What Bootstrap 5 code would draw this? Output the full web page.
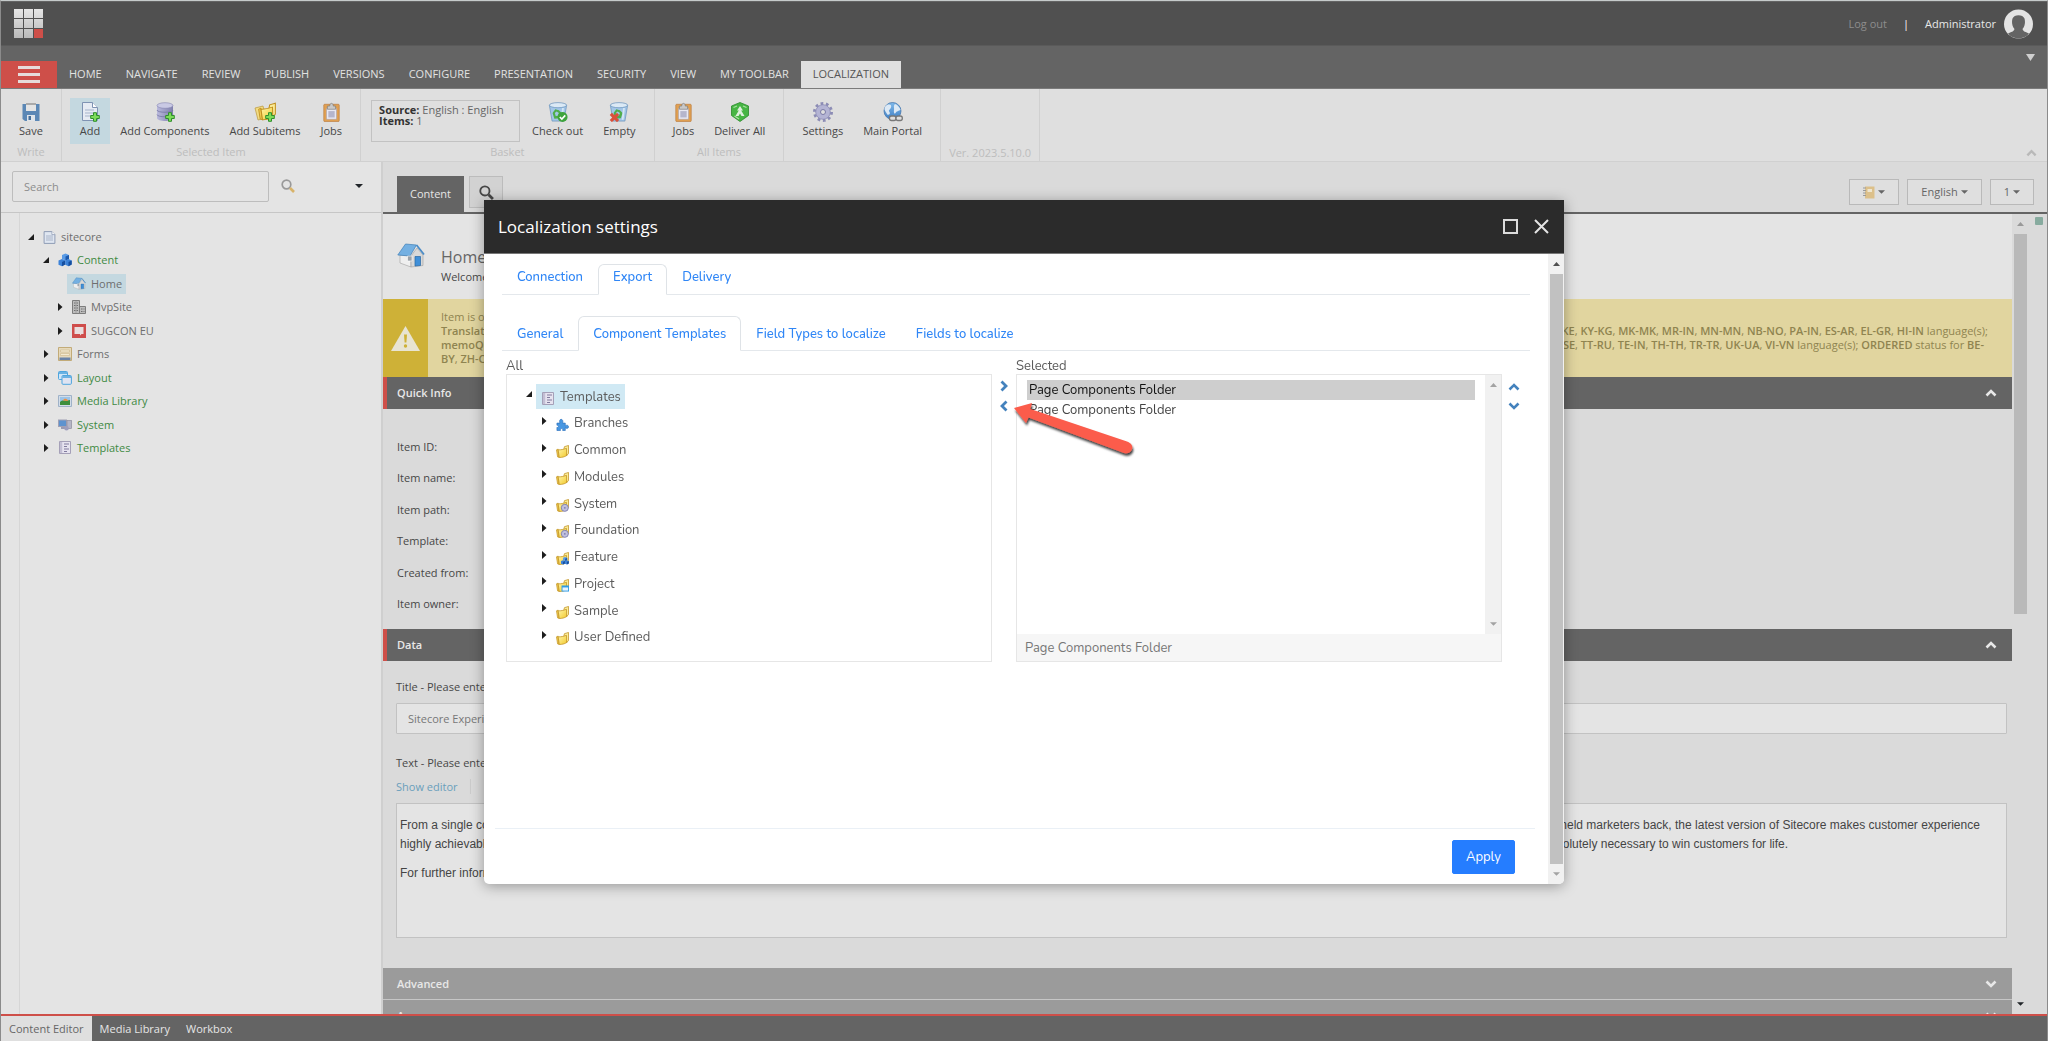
<!DOCTYPE html>
<html lang="en">
<head>
<meta charset="utf-8">
<meta name="viewport" content="width=device-width, initial-scale=1">
<title>Content Editor</title>
<link href="https://cdn.jsdelivr.net/npm/bootstrap@5.3.0/dist/css/bootstrap.min.css" rel="stylesheet">
<style>
  body { font-family: "Open Sans", sans-serif; font-size: 11px; line-height: 16px; color: #474747; background: #dadada; border-left: 1px solid #8b8b8b; border-right: 1px solid #8b8b8b; border-top: 1px solid #c6cbcb; }
  button { font: inherit; color: inherit; }
  svg { display: block; flex: none; }
  .plain-btn { background: none; border: 0; padding: 0; }

  /* global header */
  .top-header { height: 45px; background: #505050; border-top: 1px solid #646464; border-bottom: 1px solid #5a5a5a; padding: 0 14px 0 13px; }
  .top-header a { color: #8d8d8d; text-decoration: none; }
  .top-header .user { color: #e8e8e8; }

  /* ribbon */
  .ribbon-tabs { height: 43px; background: #646464; border-bottom: 1px solid #7b7b7b; padding-right: 12px; }
  .menu-btn { width: 56px; height: 27px; background: #ce4f49; }
  .menu-btn span { width: 22px; height: 3px; background: #e6dcdb; }
  .ribbon-tabs .nav-link { color: #e2e2e2; padding: 5px 12px; height: 27px; border-radius: 0; }
  .ribbon-tabs .nav-link.active { background: #dfdfdf; color: #555; }
  .ribbon { height: 73px; background: #dfdfdf; border-bottom: 1px solid #d0d0d0; padding-right: 10px; }
  .chunk { border-right: 1px solid #d0d0d0; padding: 9px 8px 0; }
  .chunk-name { color: #bdbdbd; text-align: center; }
  .rb { height: 46px; padding: 4px 10px 0; display: flex; flex-direction: column; align-items: center; background: none; border: 0; gap: 1px; }
  .rb.on { background: #c4d8e0; }
  .source-box { width: 149px; height: 42px; border: 1px solid #c2c2c2; padding: 3px 7px; line-height: 11px; margin: 2px; }
  .source-box div { color: #666; }
  .source-box b { color: #333; }

  /* tree panel */
  .side { width: 382px; background: #e4e4e4; border-right: 2px solid #cfcfcf; }
  .side-search { height: 51px; border-bottom: 1px solid #c6c6c6; padding: 8px 18px 10px 11px; }
  .side-search .form-control { width: 257px; height: 31px; font-size: 11px; background: #e4e4e4; border: 1px solid #bdbdbd; border-radius: 2px; padding: 0 11px; }
  .side-search .form-control::placeholder { color: #8d8d8d; }
  .gutter { width: 19px; border-right: 1px solid #d6d6d6; }
  .side-tree { height: 231px; margin-top: 14px; color: #6e6e6e; }
  .node { height: 20px; display: flex; align-items: center; }
  .node a { color: inherit; text-decoration: none; display: flex; align-items: center; gap: 5px; padding: 2px 4px 2px 5px; }
  .node a.on { background: #c4d8e0; }
  .node .tog { width: 6px; margin-right: 4px; }
  .lv0 { padding-left: 8px; } .lv1 { padding-left: 23px; } .lv2 { padding-left: 37px; }
  .node .sys { color: #418a43; }

  /* editor */
  .ed-tabs { height: 52px; border-bottom: 2px solid #646464; padding: 14px 13px 0 14px; }
  .ed-tab { width: 67px; height: 36px; background: #646464; color: #e6e6e6; }
  .ed-find { width: 34px; height: 32px; background: #d2d2d2; border: 1px solid #bcbcbc; margin-left: 5px; }
  .ed-tools { margin-top: 3px; }
  .ed-btn { height: 26px; border: 1px solid #b9b9b9; background: #dfdfdf; color: #666; padding: 0 13px; display: flex; align-items: center; gap: 3px; }
  .item-head { height: 85px; background: #e4e4e4; padding: 29px 14px 0; }
  .item-head h1 { font-size: 16px; line-height: 20px; color: #666; margin: 0 0 2px; }
  .warn { height: 78px; background: #e1d59f; color: #8f8450; line-height: 14px; }
  .warn b { font-weight: 600; }
  .warn-ico { width: 45px; background: #ceb137; }
  .warn-text { padding: 11px 24px 0 13px; }
  .sec { height: 32px; background: #646464; color: #e8e8e8; border-left: 4px solid #ce4f49; padding: 0 15px 0 10px; font-weight: 600; width: 100%; }
  .sec.shut { background: #9b9b9b; border-left: 0; border-bottom: 1px solid #c6c6c6; padding-left: 14px; }
  .quick { height: 220px; padding: 22px 14px 10px; }
  .quick dt { font-weight: 500; height: 31px; line-height: 31px; }
  .data { height: 307px; padding: 18px 5px 0 13px; }
  .data .form-control { background: #e4e4e4; border: 1px solid #c2c2c2; border-radius: 1px; font-size: 11px; color: #777; height: 31px; padding: 0 11px; margin: 8px 0 21px; }
  .rich { height: 135px; background: #e4e4e4; border: 1px solid #c2c2c2; padding: 12px 20px 0 3px; font-family: "Liberation Sans", Arial, sans-serif; font-size: 12px; line-height: 19px; color: #444; }
  .rich p { margin: 0 0 10px; }
  .show-ed { color: #6a9fbc; text-decoration: none; border-right: 1px solid #cbcbcb; padding-right: 12px; }
  .sb { width: 16px; display: flex; flex-direction: column; align-items: center; }
  .sb .thumb { width: 13px; background: #b9b9b9; }
  .side-mark { padding: 3px 4px 0 7px; }
  .side-dot { width: 8px; height: 8px; background: #87ab9f; border-radius: 1px; }

  /* taskbar */
  .taskbar { height: 27px; background: #646464; border-top: 2px solid #ce4f49; }
  .taskbar a { color: #e6e6e6; text-decoration: none; padding: 5px 8px 0; }
  .taskbar a.on { background: #dfdfdf; color: #666; }

  /* dialog */
  .dlg { --bs-modal-width: 1080px; margin: 200px auto 0; }
  .dlg .modal-content { height: 684px; border: 0; border-radius: 0 0 5px 5px; box-shadow: 0 2px 14px rgba(0,0,0,.35); color: #5a5a5a; font-family: Nunito, Lato, sans-serif; font-size: 13px; line-height: 18px; overflow: hidden; }
  .dlg .modal-header { height: 54px; background: #2b2b2b; border-bottom: 1px solid #777; border-radius: 0; padding: 0 15px 0 14px; }
  .dlg .modal-title { font-family: "Open Sans", sans-serif; font-size: 17px; font-weight: 500; line-height: 22px; color: #fff; }
  .dlg .nav-tabs { margin: 10px 18px 0; border-bottom: 1px solid #e4e8ec; }
  .dlg .nav-tabs.sub { margin-top: 21px; }
  .dlg .nav-link { color: #2f86f6; font-weight: 500; padding: 3px 14px 8px; height: 31px; }
  .dlg .sub .nav-link { height: 35px; padding-top: 8px; }
  .dlg .nav-link.active { border-color: #dfe3e7 #dfe3e7 #fff; color: #2f86f6; }
  .picker { padding: 6px 26px 0 22px; }
  .picker .cap { display: block; height: 17px; }
  .half { flex: 1 1 0; }
  .pane { height: 288px; border: 1px solid #e6e6e6; }
  .mt { padding: 9px 0 11px 19px; height: 286px; }
  .mt .mn { height: 25px; display: flex; align-items: center; }
  .mt .mn a { color: #5c5c5c; text-decoration: none; display: flex; align-items: center; gap: 5px; height: 25px; padding: 0 4px 0 5px; }
  .mt .mn a.on { background: #d0e9f4; }
  .mt .mn a svg { margin-top: 3px; }
  .mt .tog { width: 6px; margin-right: 4px; margin-bottom: 5px; }
  .mt .kid { padding-left: 15px; }
  .movers { color: #4482bd; display: flex; flex-direction: column; }
  .move { width: 24px; padding-top: 23px; gap: 8px; align-items: center; }
  .order { width: 20px; padding: 26px 0 0 6px; gap: 11px; }
  .pick-list { border: 0; outline: 0; padding: 5px 10px; overflow: hidden; color: #444; background: #fff; font: inherit; }
  .pick-list option { padding: 1px 2px 0; height: 20px; line-height: 19px; min-height: 20px; }
  .pick-foot { height: 27px; background: #f6f6f6; color: #777; padding: 5px 8px 4px; }
  .dlg-foot { margin: 0 13px 0 11px; border-top: 1px solid #eaf0f6; padding: 11px 20px 10px 0; height: 56px; }
  .dlg .btn-primary { --bs-btn-bg: #257dff; --bs-btn-border-color: #257dff; font-size: 13px; line-height: 18px; padding: 7px 13px; border-radius: 2px; height: 34px; }
  .track { background: #f1f1f1; }
  .dlg .sb .thumb { background: #c1c1c1; }
  .pointer { left: 526px; top: 200px; }
</style>
</head>
<body class="vh-100 d-flex flex-column overflow-hidden">

<svg width="0" height="0" class="position-absolute" aria-hidden="true">
  <defs>
    <linearGradient id="gy" x1="0" y1="0" x2="1" y2="1"><stop offset="0" stop-color="#fff6a8"/><stop offset="1" stop-color="#f2c92f"/></linearGradient>
    <linearGradient id="gb" x1="0" y1="0" x2="0" y2="1"><stop offset="0" stop-color="#7fb9ea"/><stop offset="1" stop-color="#3f7fc4"/></linearGradient>
    <linearGradient id="gg" x1="0" y1="0" x2="0" y2="1"><stop offset="0" stop-color="#e6e6e6"/><stop offset="1" stop-color="#b9b9b9"/></linearGradient>
    <linearGradient id="gp" x1="0" y1="0" x2="1" y2="0"><stop offset="0" stop-color="#b9b9dc"/><stop offset="1" stop-color="#8080ad"/></linearGradient>
    <symbol id="plus" viewBox="0 0 10 10"><path d="M3.500 .7h3v2.800h2.800v3H6.500v2.800h-3V6.500H.7v-3h2.800z" fill="#7ddc5a" stroke="#2f8f2b"/></symbol>
    <symbol id="open" viewBox="0 0 6 6"><path d="M6 0v6H0z" fill="#1d1d1d"/></symbol>
    <symbol id="shut" viewBox="0 0 6 8"><path d="M1 0l4.500 4L1 8z" fill="#1d1d1d"/></symbol>
    <symbol id="car" viewBox="0 0 8 4"><path d="M0 0h8L4 4z" fill="currentColor"/></symbol>
    <symbol id="up" viewBox="0 0 12 8"><path d="M1.500 6.500L6 2l4.500 4.500" fill="none" stroke="currentColor" stroke-width="2.600"/></symbol>
    <symbol id="dn" viewBox="0 0 12 8"><path d="M1.500 1.500L6 6l4.500-4.500" fill="none" stroke="currentColor" stroke-width="2.600"/></symbol>
    <symbol id="doc" viewBox="0 0 12 13"><path d="M.6.6h7.800l3 3v8.800H.6z" fill="#dfe6f1" stroke="#8f9cb5"/><path d="M8.400.6v3h3" fill="#fff" stroke="#8f9cb5" stroke-width=".8"/><path d="M2.500 5h7M2.500 7h7M2.500 9h7" stroke="#a9b4c8"/></symbol>
    <symbol id="cubes" viewBox="0 0 14 14"><path d="M4 2l3.500-1.500L11 2v4L7.500 7.500 4 6z" fill="#5a9be6"/><path d="M7.500 3.500L11 2v4L7.500 7.500z" fill="#1c59ad"/><path d="M.5 7.500L4 6l3.200 1.500v4L4 13.200.5 11.700z" fill="#3c82d8"/><path d="M4 9l3.200-1.500v4L4 13.200z" fill="#174f9f"/><path d="M7.200 7.500L10.500 6l3.200 1.500v4l-3.200 1.700-3.300-1.500z" fill="#3c82d8"/><path d="M10.500 9l3.200-1.500v4l-3.200 1.700z" fill="#174f9f"/></symbol>
    <symbol id="house" viewBox="0 0 28 25"><path d="M3 12l11 1v11L3 20z" fill="#efefef" stroke="#9f9f9f" stroke-width=".6"/><path d="M14 13l6-8 6 7v10.500L14 24z" fill="#d8d8d8" stroke="#9f9f9f" stroke-width=".6"/><path d="M.8 12L8.500 1l11 1-6.500 11z" fill="#74b0e2" stroke="#3f7fb8" stroke-width=".7"/><path d="M19.500 2l7.500 9.500" fill="none" stroke="#4a8bc6" stroke-width="1.800"/><path d="M18 13.500h5.500v9L18 23z" fill="#3f8fd8" stroke="#2767a5" stroke-width=".7"/><path d="M10.500 13h4.500v5h-4.500z" fill="#9aa1a8" stroke="#fff" stroke-width=".6"/></symbol>
    <symbol id="bldg" viewBox="0 0 14 14"><path d="M.5.5h7v13h-7zM7.500 6.500h6v7h-6z" fill="#bdbdbd" stroke="#7d7d7d"/><path d="M2 3h4M2 5.500h4M2 8h4M2 10.500h4M9 9h3.500M9 11.500h3.500" stroke="#6e6e6e" stroke-dasharray="1.500 1"/><path d="M4 1v12" stroke="#8f8f8f" stroke-width=".6"/></symbol>
    <symbol id="sug" viewBox="0 0 14 14"><path d="M0 0h14v14H0z" fill="#cf4d4b"/><path d="M2.500 3h9v7H9.500l-1.500 1.500V10H2.500z" fill="#e9dede"/></symbol>
    <symbol id="forms" viewBox="0 0 14 14"><path d="M.5.5h13v13H.5z" fill="#e6d9bb" stroke="#c2ab78"/><path d="M2.500 3h9v2h-9zM2.500 6.500h9v2h-9z" fill="#f3ead2" stroke="#cdb98c" stroke-width=".6"/><path d="M1.500 10.500h11v2.500h-11z" fill="#6b84a8"/></symbol>
    <symbol id="layout" viewBox="0 0 14 14"><rect x=".5" y=".5" width="9" height="8" rx="1" fill="#cfe6f8" stroke="#4ea5de"/><path d="M1 2h8" stroke="#4ea5de" stroke-width="1.600"/><rect x="4" y="4.500" width="9.400" height="8.800" rx="1" fill="#dfe4f2" stroke="#4ea5de"/><path d="M4.500 6h8.500" stroke="#4ea5de" stroke-width="1.600"/></symbol>
    <symbol id="media" viewBox="0 0 14 12"><path d="M.5.5h13v11H.5z" fill="#d3dde8" stroke="#9fb2c8"/><path d="M2 2h10v8H2z" fill="#9cc4e8"/><path d="M2 10V7c3-3 5 0 10-2v5z" fill="#3f8f3d"/><path d="M5 5.500c1-3 5-2 5 .5z" fill="#ef8f3b"/></symbol>
    <symbol id="system" viewBox="0 0 14 12"><rect x=".5" y="1" width="8" height="6.500" fill="#5e93cf" stroke="#a0a0b4"/><path d="M3 8h4v2H3z" fill="#9a9ab0"/><rect x="9" y="1.500" width="4.500" height="8" fill="#b6b6c6" stroke="#8c8c9d" stroke-width=".7"/><circle cx="8.500" cy="9.300" r="2.300" fill="#9e9ebc"/></symbol>
    <symbol id="tpl" viewBox="0 0 12 13"><path d="M.5.500h11v12H.5z" fill="#e6e3ef" stroke="#a5a0b8"/><path d="M1 1h2.200v11H1z" fill="#c3bfd4"/><path d="M5 3h5M5 5.500h3M5 8h5M5 10.500h3" stroke="#817b9e"/></symbol>
    <symbol id="fold" viewBox="0 0 14 14"><path d="M.5 5.200l1.800-.8 1.200 9-1.800-.6z" fill="#f0cb50" stroke="#c08f1f" stroke-width=".7"/><path d="M8.500 4.500l.6-2.700 4.400-1.300v8.500l-2 2.500z" fill="#fbec98" stroke="#c08f1f" stroke-width=".8"/><path d="M2.300 5.200c3 .2 6-.6 9-1.600l.2 7.800c-2.500 1.500-5 2.100-8 2z" fill="url(#gy)" stroke="#c08f1f" stroke-width=".8"/></symbol>
    <symbol id="puz" viewBox="0 0 14 14"><path d="M1 13.500V10c1.800.8 2.400-1.800.6-2.200L1 7.800V5.500h3.200C2.300 0 8.700 0 7.200 5.500H10v3c1.300-1.300 3.500-.8 3.500 1s-2 2.200-3.500 1v3H7.200c.9-2.800-3.200-2.800-2.400 0z" fill="#4797e2" stroke="#2a6fbc" stroke-width=".7"/></symbol>
    <symbol id="clip" viewBox="0 0 20 22"><rect x="1.500" y="2.500" width="17" height="19" rx="1" fill="#e0a052" stroke="#b9783a" stroke-width=".7"/><path d="M4.500 7h11v12h-11z" fill="#e8e8f2" stroke="#9a9ab0" stroke-width=".5"/><path d="M6.500 10h7v7h-7z" fill="#b5b5cc"/><path d="M5.500 4.500h2.500C8 .5 12 .5 12 4.500h2.500V8h-9z" fill="#c9c9c9" stroke="#777" stroke-width=".7"/></symbol>
    <symbol id="bin" viewBox="0 0 22 22"><path d="M1.500 3.500h19L17.500 21h-13z" fill="#a3c6e8" stroke="#6a93bd" stroke-width=".8"/><ellipse cx="11" cy="3.500" rx="9.500" ry="2.800" fill="#dbe9f5" stroke="#6a93bd" stroke-width=".8"/><path d="M5 12l3-4 4 1 3 3-2 6-6 .5z" fill="#4fae4b"/><path d="M7.500 12l2-1.500 2.500 1.500-1 3-2.500.5z" fill="#a3c6e8"/><path d="M15.500 6.500h2l-1.500 13h-2z" fill="#d4e6f5"/></symbol>
    <symbol id="mag" viewBox="0 0 14 14"><circle cx="5.500" cy="5.500" r="4.300" fill="none" stroke="currentColor" stroke-width="1.700"/><path d="M9 9l4 4" stroke="var(--h, currentColor)" stroke-width="2.600"/></symbol>
  </defs>
</svg>

<header class="top-header d-flex align-items-center flex-shrink-0">
  <svg width="30" height="30" viewBox="0 0 30 30" role="img" aria-label="Sitecore"><g fill="url(#gg)"><path d="M0 0h9v9H0zM10 0h9v9h-9zM20 0h9v9h-9zM0 10h9v9H0zM10 10h9v9h-9zM20 10h9v9h-9zM0 20h9v9H0zM10 20h9v9h-9z"/></g><path d="M20 20h9v9h-9z" fill="#ce4f49"/></svg>
  <div class="ms-auto d-flex align-items-center">
    <a href="#">Log out</a><span class="px-3 text-white">|</span><a href="#" class="user me-2">Administrator</a>
    <svg width="29" height="30" viewBox="0 0 29 30"><circle cx="14.500" cy="15" r="14.500" fill="#e4e4e4"/><path d="M4 24.500c3-1.500 6-2 6.500-4.500C8 17 7.500 13 8.500 9.500 10 5 19 5 20.500 9.500c1 3.500.5 7.500-2 10.500.5 2.500 3.500 3 6.500 4.500-5 6.500-16 6.500-21 0z" fill="#646464"/></svg>
  </div>
</header>

<nav class="ribbon-tabs d-flex align-items-end flex-shrink-0" aria-label="Ribbon">
  <button class="menu-btn plain-btn d-flex flex-column align-items-center justify-content-center gap-1" aria-label="Menu"><span></span><span></span><span></span></button>
  <div class="nav flex-nowrap">
    <a class="nav-link" href="#">HOME</a><a class="nav-link" href="#">NAVIGATE</a><a class="nav-link" href="#">REVIEW</a><a class="nav-link" href="#">PUBLISH</a><a class="nav-link" href="#">VERSIONS</a><a class="nav-link" href="#">CONFIGURE</a><a class="nav-link" href="#">PRESENTATION</a><a class="nav-link" href="#">SECURITY</a><a class="nav-link" href="#">VIEW</a><a class="nav-link" href="#">MY TOOLBAR</a><a class="nav-link active" href="#">LOCALIZATION</a>
  </div>
  <button class="plain-btn ms-auto align-self-start pt-2" aria-label="Toggle"><svg width="9" height="7" viewBox="0 0 9 7"><path d="M0 0h9L4.500 7z" fill="#cfcfcf"/></svg></button>
</nav>

<div class="ribbon d-flex flex-shrink-0">
  <section class="chunk">
    <button class="rb"><svg width="20" height="20" viewBox="0 0 20 20"><path d="M1.500 2h17v17H4l-2.500-2z" fill="#5b87b5"/><path d="M5 1h10v8H5z" fill="#e4e4e4"/><path d="M5 1h10v2H5z" fill="#aaa"/><path d="M6 13h8v6H6z" fill="#dfe4ea"/><path d="M7.500 14h2.500v4H7.500z" fill="#456f9c"/></svg>Save</button>
    <div class="chunk-name">Write</div>
  </section>
  <section class="chunk">
    <div class="d-flex">
      <button class="rb on"><svg width="20" height="20" viewBox="0 0 20 20"><path d="M2.500.500h10l5 5v13h-15z" fill="#e6ebf3" stroke="#7f93b3"/><path d="M12.500.500v5h5" fill="#fff" stroke="#7f93b3"/><path d="M5 8h9M5 11h9M5 14h6" stroke="#a5b3ca"/><use href="#plus" x="10" y="10" width="10" height="10"/></svg>Add</button>
      <button class="rb"><svg width="20" height="20" viewBox="0 0 20 20"><path d="M2 3v13c0 4 16 4 16 0V3z" fill="url(#gp)"/><ellipse cx="10" cy="3.500" rx="8" ry="2.800" fill="#c9c9e4" stroke="#8585b0" stroke-width=".6"/><path d="M2 8c0 3 16 3 16 0M2 12.500c0 3 16 3 16 0" fill="none" stroke="#7676a3" stroke-width=".8"/><use href="#plus" x="10" y="10" width="10" height="10"/></svg>Add Components</button>
      <button class="rb"><svg width="22" height="20" viewBox="0 0 22 20"><path d="M1 6l8-2 3 12-8 2z" fill="#f2dc83" stroke="#b9973b" stroke-width=".7"/><svg x="4" width="18" height="19"><use href="#fold"/></svg><use href="#plus" x="11" y="10" width="10" height="10"/></svg>Add Subitems</button>
      <button class="rb"><svg width="19" height="20"><use href="#clip"/></svg>Jobs</button>
    </div>
    <div class="chunk-name">Selected Item</div>
  </section>
  <section class="chunk">
    <div class="d-flex">
      <div class="source-box text-nowrap"><div><b>Source:</b> English : English</div><div><b>Items:</b> 1</div></div>
      <button class="rb"><svg width="20" height="20" viewBox="0 0 22 22"><use href="#bin"/><circle cx="16" cy="16.500" r="5.500" fill="#3fa43c"/><path d="M13 16.500l2.200 2.200 3.800-4" fill="none" stroke="#fff" stroke-width="1.800"/></svg>Check out</button>
      <button class="rb"><svg width="20" height="20" viewBox="0 0 22 22"><use href="#bin"/><path d="M2 13l8 8M10 13l-8 8" stroke="#d9503a" stroke-width="3.400"/></svg>Empty</button>
    </div>
    <div class="chunk-name">Basket</div>
  </section>
  <section class="chunk">
    <div class="d-flex">
      <button class="rb"><svg width="19" height="20"><use href="#clip"/></svg>Jobs</button>
      <button class="rb"><svg width="20" height="20" viewBox="0 0 20 20"><path d="M10 .5L18.500 4v9.500L10 19.500l-8.500-6V4z" fill="#47b544" stroke="#2a8a2a" stroke-width=".8"/><path d="M10 4l3 4.500h-1.800L14.500 14h-3L10 11.500 8.500 14h-3l3.300-5.500H7z" fill="#dfeedd"/><path d="M3.500 5.500L7 4M16.500 5.500L13 4M4.500 14l4.500 3" stroke="#a6e39f" stroke-width="1.300"/></svg>Deliver All</button>
    </div>
    <div class="chunk-name">All Items</div>
  </section>
  <section class="chunk">
    <div class="d-flex">
      <button class="rb"><svg width="20" height="20" viewBox="0 0 20 20"><circle cx="10" cy="10" r="8.500" fill="none" stroke="#8c8cb5" stroke-width="3" stroke-dasharray="2.700 2.640"/><circle cx="10" cy="10" r="7.300" fill="#b4b4d4" stroke="#8c8cb5" stroke-width=".8"/><circle cx="10" cy="10" r="2.500" fill="#dfdfdf" stroke="#7b7ba6"/></svg>Settings</button>
      <button class="rb"><svg width="20" height="20" viewBox="0 0 20 20"><circle cx="9.500" cy="9" r="8.500" fill="url(#gb)" stroke="#3d6ea6" stroke-width=".7"/><path d="M4 3c3-1 5 0 4 2.500S5 8 6.500 10 5 14 4 12 1 8 1.500 6 3 4 4 3zM12 2c3 1 5 4 5.500 6-2 1-4 1-5 3s-2-1-1.500-3S10 4 12 2z" fill="#dce9f5"/><rect x="6.500" y="14" width="6.500" height="4.500" rx="2" fill="#dfdfdf" stroke="#777" stroke-width="1.300"/><rect x="13" y="14" width="6.300" height="4.500" rx="2" fill="#dfdfdf" stroke="#777" stroke-width="1.300"/></svg>Main Portal</button>
    </div>
  </section>
  <section class="chunk d-flex flex-column justify-content-end"><div class="chunk-name">Ver. 2023.5.10.0</div></section>
  <button class="plain-btn ms-auto align-self-end pb-1" style="color:#b9b9b9" aria-label="Collapse ribbon"><svg width="11" height="8"><use href="#up"/></svg></button>
</div>

<div class="d-flex flex-grow-1 overflow-hidden">
  <aside class="side flex-shrink-0 d-flex flex-column">
    <div class="side-search d-flex align-items-center">
      <input class="form-control" type="search" placeholder="Search" aria-label="Search">
      <button class="plain-btn ms-2 ps-1" style="color:#999;--h:#d8b36a" aria-label="Find"><svg width="14" height="14"><use href="#mag"/></svg></button>
      <button class="plain-btn ms-auto text-dark" aria-label="Search options"><svg width="8" height="4"><use href="#car"/></svg></button>
    </div>
    <div class="d-flex flex-grow-1">
      <div class="gutter"></div>
      <div class="side-tree d-flex flex-column justify-content-between">
        <div class="node lv0"><svg class="tog" height="6"><use href="#open"/></svg><a href="#"><svg width="13" height="13"><use href="#doc"/></svg>sitecore</a></div>
        <div class="node lv1"><svg class="tog" height="6"><use href="#open"/></svg><a href="#" class="sys"><svg width="14" height="14"><use href="#cubes"/></svg>Content</a></div>
        <div class="node lv2"><span class="tog"></span><a href="#" class="on"><svg width="14" height="13"><use href="#house"/></svg>Home</a></div>
        <div class="node lv2"><svg class="tog" height="8"><use href="#shut"/></svg><a href="#"><svg width="14" height="14"><use href="#bldg"/></svg>MvpSite</a></div>
        <div class="node lv2"><svg class="tog" height="8"><use href="#shut"/></svg><a href="#"><svg width="14" height="14"><use href="#sug"/></svg>SUGCON EU</a></div>
        <div class="node lv1"><svg class="tog" height="8"><use href="#shut"/></svg><a href="#"><svg width="14" height="14"><use href="#forms"/></svg>Forms</a></div>
        <div class="node lv1"><svg class="tog" height="8"><use href="#shut"/></svg><a href="#" class="sys"><svg width="14" height="14"><use href="#layout"/></svg>Layout</a></div>
        <div class="node lv1"><svg class="tog" height="8"><use href="#shut"/></svg><a href="#" class="sys"><svg width="14" height="12"><use href="#media"/></svg>Media Library</a></div>
        <div class="node lv1"><svg class="tog" height="8"><use href="#shut"/></svg><a href="#" class="sys"><svg width="14" height="12"><use href="#system"/></svg>System</a></div>
        <div class="node lv1"><svg class="tog" height="8"><use href="#shut"/></svg><a href="#" class="sys"><svg width="14" height="13"><use href="#tpl"/></svg>Templates</a></div>
      </div>
    </div>
  </aside>

  <main class="flex-grow-1 d-flex flex-column overflow-hidden">
    <div class="ed-tabs d-flex flex-shrink-0 align-items-start">
      <button class="ed-tab plain-btn">Content</button>
      <button class="ed-find p-0 d-flex align-items-center justify-content-center" aria-label="Find"><svg width="15" height="15"><use href="#mag"/></svg></button>
      <div class="ed-tools ms-auto d-flex gap-2">
        <button class="ed-btn" aria-label="Notes"><svg width="12" height="13" viewBox="0 0 12 13"><path d="M2 .5h9.500v12H2z" fill="#dcc08a"/><path d="M4.500 3h4.500v3H4.500z" fill="#efe6cf"/><path d="M0 2h3M0 4.500h3M0 7h3M0 9.500h3" stroke="#999"/></svg><svg width="7" height="4"><use href="#car"/></svg></button>
        <button class="ed-btn">English<svg width="7" height="4"><use href="#car"/></svg></button>
        <button class="ed-btn">1<svg width="7" height="4"><use href="#car"/></svg></button>
      </div>
    </div>
    <div class="d-flex flex-grow-1 overflow-hidden">
      <div class="flex-grow-1 overflow-hidden">
        <div class="item-head d-flex">
          <svg width="28" height="25"><use href="#house"/></svg>
          <div class="ps-3 pt-1"><h1>Home</h1><div>Welcome to Sitecore</div></div>
        </div>
        <div class="warn d-flex">
          <div class="warn-ico d-flex align-items-center justify-content-center"><svg width="29" height="25" viewBox="0 0 29 25"><path d="M14.500 0L29 25H0z" fill="#e8e4d2"/><path d="M13 8.500h3l-.6 8h-1.800z" fill="#ceb137"/><circle cx="14.500" cy="20" r="1.700" fill="#ceb137"/></svg></div>
          <div class="warn-text flex-grow-1">
            <div>Item is out for translation</div>
            <div class="d-flex justify-content-between"><b>Translation</b><span><b>SW-KE</b>, <b>KY-KG</b>, <b>MK-MK</b>, <b>MR-IN</b>, <b>MN-MN</b>, <b>NB-NO</b>, <b>PA-IN</b>, <b>ES-AR</b>, <b>EL-GR</b>, <b>HI-IN</b> language(s);</span></div>
            <div class="d-flex justify-content-between pe-1"><b>memoQ</b><span><b>SV-SE</b>, <b>TT-RU</b>, <b>TE-IN</b>, <b>TH-TH</b>, <b>TR-TR</b>, <b>UK-UA</b>, <b>VI-VN</b> language(s); <b>ORDERED</b> status for <b>BE-</b></span></div>
            <div><b>BY</b>, <b>ZH-CN</b></div>
          </div>
        </div>
        <button class="sec plain-btn d-flex align-items-center justify-content-between">Quick Info<svg width="12" height="8"><use href="#up"/></svg></button>
        <dl class="quick m-0 d-flex flex-column justify-content-between">
          <dt>Item ID:</dt><dt>Item name:</dt><dt>Item path:</dt><dt>Template:</dt><dt>Created from:</dt><dt>Item owner:</dt>
        </dl>
        <button class="sec plain-btn d-flex align-items-center justify-content-between">Data<svg width="12" height="8"><use href="#up"/></svg></button>
        <div class="data">
          <label for="ttl">Title - Please enter a title:</label>
          <input id="ttl" class="form-control" value="Sitecore Experience Platform">
          <div>Text - Please enter a text:</div>
          <div class="mt-2 mb-2"><a href="#" class="show-ed">Show editor</a></div>
          <div class="rich">
            <p>From a single connected platform that integrates with other customer-facing platforms, to a single view of the customer in a data marketing repository, to completely eliminating much of the complexity that has previously held marketers back, the latest version of Sitecore makes customer experience highly achievable. Learn how the version of Sitecore gives marketers the complete data, integrated tools, and automation capabilities to engage customers throughout an iterative lifecycle – the technology foundation absolutely necessary to win customers for life.</p>
            <p>For further information, please go to the Sitecore Developer Portal</p>
          </div>
        </div>
        <button class="sec shut plain-btn d-flex align-items-center justify-content-between">Advanced<svg width="12" height="8"><use href="#dn"/></svg></button>
        <button class="sec shut plain-btn d-flex align-items-center justify-content-between">Appearance<svg width="12" height="8"><use href="#dn"/></svg></button>
      </div>
      <div class="sb flex-shrink-0" style="color:#999">
        <svg class="my-2" width="7" height="4" viewBox="0 0 7 4"><path d="M0 4h7L3.500 0z" fill="currentColor"/></svg>
        <div class="thumb" style="height:380px"></div>
        <svg class="mt-auto mb-2 text-dark" width="7" height="4"><use href="#car"/></svg>
      </div>
      <div class="side-mark flex-shrink-0"><div class="side-dot"></div></div>
    </div>
  </main>
</div>

<footer class="taskbar d-flex flex-shrink-0"><a href="#" class="on">Content Editor</a><a href="#">Media Library</a><a href="#">Workbox</a></footer>

<div class="modal d-block" tabindex="-1" role="dialog" aria-labelledby="dlgTitle">
  <div class="modal-dialog dlg">
    <div class="modal-content">
      <div class="modal-header">
        <h2 class="modal-title" id="dlgTitle">Localization settings</h2>
        <div class="d-flex gap-3">
          <button class="plain-btn" aria-label="Maximize"><svg width="15" height="15"><rect x="1" y="1" width="13" height="13" fill="none" stroke="#dcdcdc" stroke-width="2"/></svg></button>
          <button class="plain-btn" aria-label="Close"><svg width="15" height="15"><path d="M1 1l13 13M14 1L1 14" stroke="#e4e4e4" stroke-width="2"/></svg></button>
        </div>
      </div>
      <div class="d-flex flex-grow-1">
        <div class="flex-grow-1 d-flex flex-column">
          <div class="nav nav-tabs"><a class="nav-link" href="#">Connection</a><a class="nav-link active" href="#">Export</a><a class="nav-link" href="#">Delivery</a></div>
          <div class="nav nav-tabs sub"><a class="nav-link" href="#">General</a><a class="nav-link active" href="#">Component Templates</a><a class="nav-link" href="#">Field Types to localize</a><a class="nav-link" href="#">Fields to localize</a></div>
          <div class="picker d-flex">
            <div class="half">
              <div class="cap">All</div>
              <div class="pane">
                <div class="mt d-flex flex-column justify-content-between">
                  <div class="mn"><svg class="tog" height="6"><use href="#open"/></svg><a href="#" class="on"><svg width="14" height="13"><use href="#tpl"/></svg>Templates</a></div>
                  <div class="mn kid"><svg class="tog" height="8"><use href="#shut"/></svg><a href="#"><svg width="13" height="13"><use href="#puz"/></svg>Branches</a></div>
                  <div class="mn kid"><svg class="tog" height="8"><use href="#shut"/></svg><a href="#"><svg width="13" height="13"><use href="#fold"/></svg>Common</a></div>
                  <div class="mn kid"><svg class="tog" height="8"><use href="#shut"/></svg><a href="#"><svg width="13" height="13"><use href="#fold"/></svg>Modules</a></div>
                  <div class="mn kid"><svg class="tog" height="8"><use href="#shut"/></svg><a href="#"><svg width="13" height="13" viewBox="0 0 14 14"><use href="#fold"/><circle cx="9.500" cy="9.500" r="3.800" fill="#c0c0de" stroke="#7f7fb0"/><circle cx="9.500" cy="9.500" r="1" fill="#7f7fb0"/></svg>System</a></div>
                  <div class="mn kid"><svg class="tog" height="8"><use href="#shut"/></svg><a href="#"><svg width="13" height="13" viewBox="0 0 14 14"><use href="#fold"/><circle cx="9.500" cy="9.500" r="3.800" fill="#c0c0de" stroke="#7f7fb0"/><circle cx="9.500" cy="9.500" r="1" fill="#7f7fb0"/></svg>Foundation</a></div>
                  <div class="mn kid"><svg class="tog" height="8"><use href="#shut"/></svg><a href="#"><svg width="13" height="13" viewBox="0 0 14 14"><use href="#fold"/><use href="#cubes" x="5" y="5" width="9" height="9"/></svg>Feature</a></div>
                  <div class="mn kid"><svg class="tog" height="8"><use href="#shut"/></svg><a href="#"><svg width="13" height="13" viewBox="0 0 14 14"><use href="#fold"/><rect x="6.500" y="7.500" width="7" height="5.500" fill="#e6f4ff" stroke="#2f9be6"/><path d="M6.500 8.300h7" stroke="#2f9be6" stroke-width="1.600"/></svg>Project</a></div>
                  <div class="mn kid"><svg class="tog" height="8"><use href="#shut"/></svg><a href="#"><svg width="13" height="13"><use href="#fold"/></svg>Sample</a></div>
                  <div class="mn kid"><svg class="tog" height="8"><use href="#shut"/></svg><a href="#"><svg width="13" height="13"><use href="#fold"/></svg>User Defined</a></div>
                </div>
              </div>
            </div>
            <div class="movers move">
              <button class="plain-btn" aria-label="Add to selected"><svg width="8" height="12" viewBox="0 0 8 12"><path d="M1.500 1.500L6 6l-4.500 4.500" fill="none" stroke="currentColor" stroke-width="2.800"/></svg></button>
              <button class="plain-btn" aria-label="Remove from selected"><svg width="8" height="12" viewBox="0 0 8 12"><path d="M6.500 1.500L2 6l4.500 4.500" fill="none" stroke="currentColor" stroke-width="2.800"/></svg></button>
            </div>
            <div class="half">
              <label for="sel" class="cap">Selected</label>
              <div class="pane d-flex flex-column">
                <div class="d-flex flex-grow-1">
                  <select id="sel" class="pick-list flex-grow-1" multiple size="2"><option selected>Page Components Folder</option><option>Page Components Folder</option></select>
                  <div class="sb track justify-content-between py-2" style="color:#a3a3a3"><svg width="7" height="4" viewBox="0 0 7 4"><path d="M0 4h7L3.500 0z" fill="currentColor"/></svg><svg width="7" height="4"><use href="#car"/></svg></div>
                </div>
                <div class="pick-foot">Page Components Folder</div>
              </div>
            </div>
            <div class="movers order">
              <button class="plain-btn" aria-label="Move up"><svg width="12" height="8"><use href="#up"/></svg></button>
              <button class="plain-btn" aria-label="Move down"><svg width="12" height="8"><use href="#dn"/></svg></button>
            </div>
          </div>
          <div class="dlg-foot mt-auto d-flex justify-content-end"><button class="btn btn-primary">Apply</button></div>
        </div>
        <div class="sb track" style="color:#505050">
          <svg class="my-2" width="7" height="4" viewBox="0 0 7 4"><path d="M0 4h7L3.500 0z" fill="currentColor"/></svg>
          <div class="thumb flex-grow-1"></div>
          <svg class="my-2" style="color:#a3a3a3" width="7" height="4"><use href="#car"/></svg>
        </div>
      </div>
      <svg class="pointer position-absolute" width="130" height="64" viewBox="0 0 130 64" aria-hidden="true"><defs><filter id="sh" x="-10%" y="-10%" width="120%" height="140%"><feDropShadow dx="1" dy="2.500" stdDeviation="1.300" flood-color="#000" flood-opacity=".75"/></filter></defs><path filter="url(#sh)" d="M4 8L22 3l-1.500 6L117 41.500c5 2 6 5 5 8-1.500 3-4 4.500-8 3.500L18.500 17.500 16 23z" fill="#fb5c4c"/></svg>
    </div>
  </div>
</div>

<script src="https://cdn.jsdelivr.net/npm/bootstrap@5.3.0/dist/js/bootstrap.bundle.min.js"></script>
</body>
</html>
